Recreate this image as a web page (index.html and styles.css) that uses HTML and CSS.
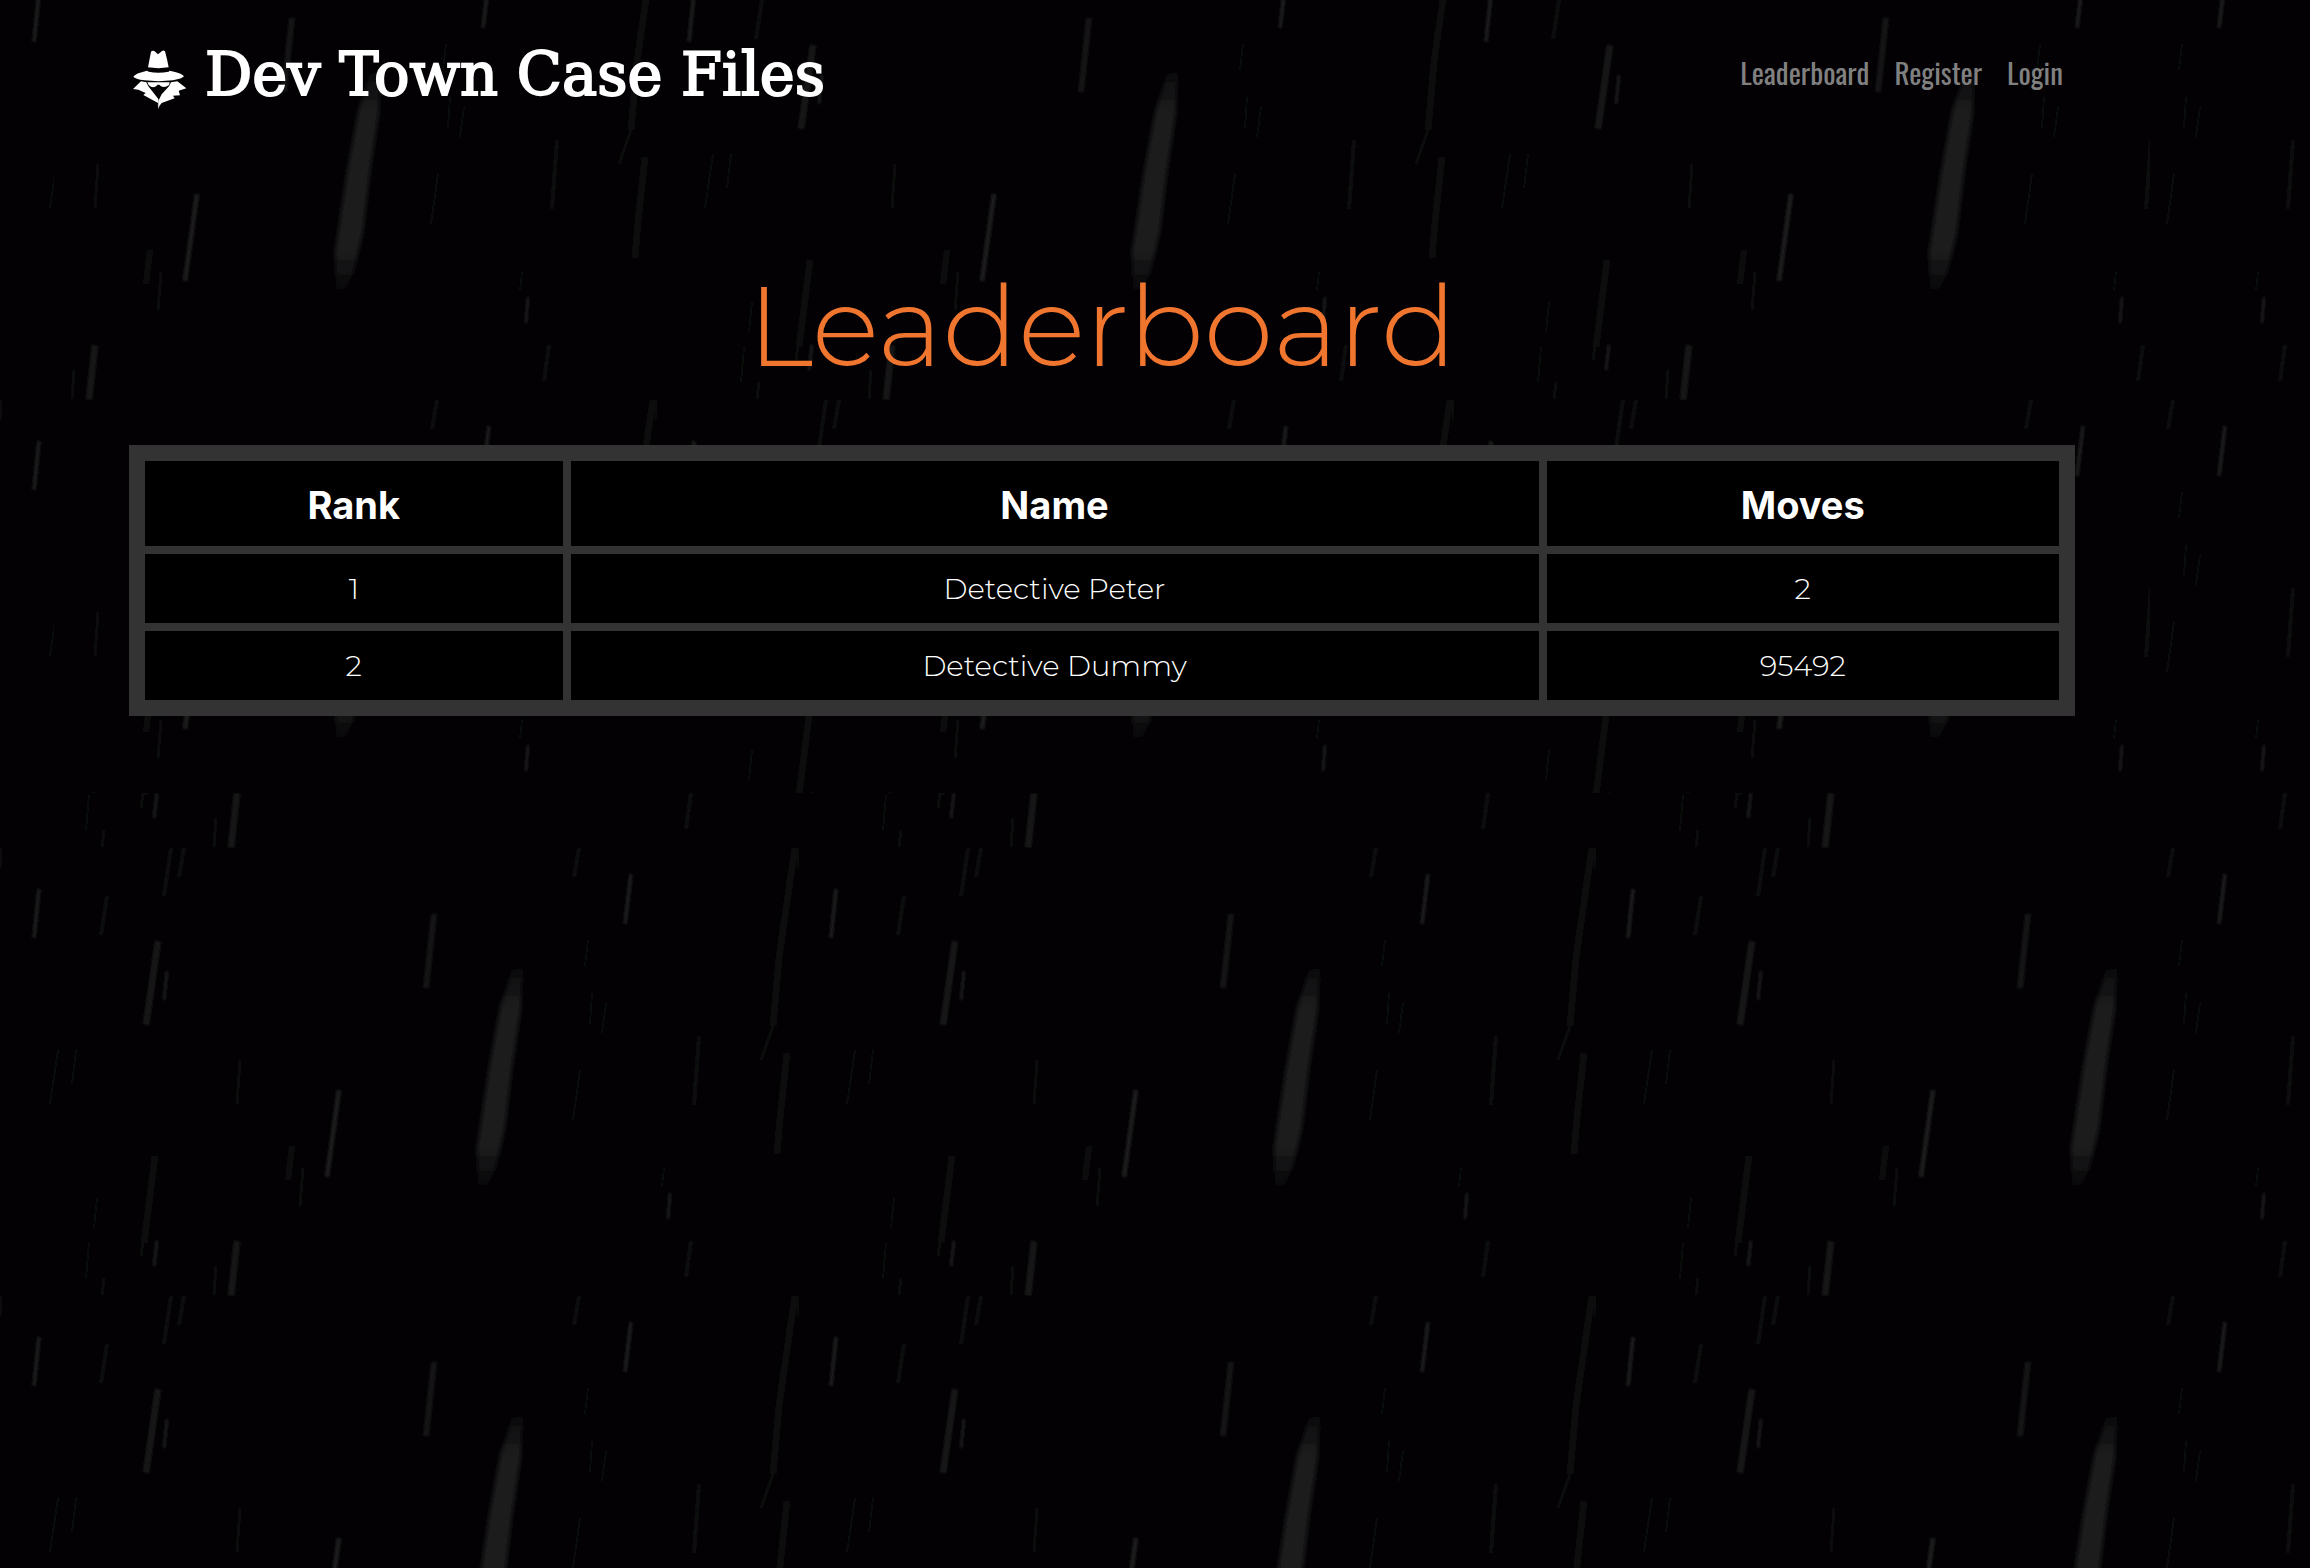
FILE: index.html
```html
<!DOCTYPE html>
<html lang="en">
<head>
<meta charset="utf-8">
<meta name="viewport" content="width=device-width, initial-scale=1">
<title>Dev Town Case Files - Leaderboard</title>
<link rel="stylesheet" href="styles.css">
</head>
<body>
<div class="page">
  <header class="topbar">
    <a class="brand" href="#">
      <svg class="brand-icon" viewBox="0 0 192 198" aria-hidden="true">
        <path d="M66 20 Q70 15 76 18 L87 28 L99 18 Q104 15 108 19 L114 43 L119 67 Q88 72 57 67 Z"/>
        <path d="M13 95 Q18 85 54 77 L59 80 Q88 86 119 80 L122 77 Q158 84 165 94 Q160 101 132 106 Q88 111 46 106 Q18 102 13 95 Z"/>
        <path d="M36 109 L52 112 L58 124 L88 162 L89 192 Q85 183 87 174 L50 154 L43 150 L50 144 L28 134 L12 132 Z"/>
        <path d="M145 109 L126 112 L120 124 L98 148 L88 168 L89 192 Q91 180 98 174 L137 160 L132 152 L153 151 L149 137 L172 130 Z"/>
        <path d="M55 112 L122 112 L120 120 Q106 131 95 123 L91 119 L86 119 L81 124 Q70 131 59 120 Z"/>
      </svg>
      <span>Dev Town Case Files</span>
    </a>
    <nav class="nav">
      <a href="#">Leaderboard</a>
      <a href="#">Register</a>
      <a href="#">Login</a>
    </nav>
  </header>
  <main>
    <h1 class="title">Leaderboard</h1>
    <table class="scores">
      <thead>
        <tr><th class="col-rank" scope="col">Rank</th><th class="col-name" scope="col">Name</th><th class="col-moves" scope="col">Moves</th></tr>
      </thead>
      <tbody>
        <tr><td>1</td><td>Detective Peter</td><td>2</td></tr>
        <tr><td>2</td><td>Detective Dummy</td><td>95492</td></tr>
      </tbody>
    </table>
  </main>
</div>
</body>
</html>
```
FILE: styles.css
```css
:root {
  --rain: url("data:image/svg+xml,%3Csvg xmlns='http://www.w3.org/2000/svg' width='797' height='448'%3E%3Cdefs%3E%3ClinearGradient id='g' x1='0' y1='0' x2='0' y2='1'%3E%3Cstop offset='0' stop-color='%231e1e1e' stop-opacity='.3'/%3E%3Cstop offset='.2' stop-color='%231e1e1e'/%3E%3Cstop offset='.8' stop-color='%231e1e1e'/%3E%3Cstop offset='1' stop-color='%231e1e1e' stop-opacity='.1'/%3E%3C/linearGradient%3E%3Cfilter id='s' x='-50%25' y='-10%25' width='200%25' height='120%25'%3E%3CfeGaussianBlur stdDeviation='1'/%3E%3C/filter%3E%3Cfilter id='b' x='-50%25' y='-10%25' width='200%25' height='120%25'%3E%3CfeGaussianBlur stdDeviation='2'/%3E%3C/filter%3E%3C/defs%3E%3Cpath d='M512 122 L523 120 L521 160 L512 220 L505 280 L495 322 L487 338 L478 340 L477 300 L489 220 L500 160 Z' fill='url(%23g)' filter='url(%23b)'/%3E%3Cg fill='none' filter='url(%23s)'%3E%3Cg stroke='%231a1a1a'%3E%3Cpath stroke-width='6' d='M434 66L426 140' opacity='.8'/%3E%3Cpath stroke-width='4' d='M39 41L34 90M631 26L625 76'/%3E%3Cpath stroke-width='5' d='M339 242L327 329'/%3E%3Cpath stroke-width='3' d='M670 345L668 371M157 393L154 418M167 123L164 152'/%3E%3C/g%3E%3Cg stroke='%23131413'%3E%3Cpath stroke-width='7' d='M158 93L146 177M237 393L231 448'/%3E%3Cpath stroke-width='6' d='M292 298L288 332' opacity='.8'/%3E%3Cpath stroke-width='3' d='M171 0L164 48M184 0L179 29M579 0L574 29M691 393L686 429M107 48L101 87M699 188L694 257'/%3E%3C/g%3E%3Cg stroke='%230b0e0b'%3E%3Cpath stroke-width='7' d='M795 0Q786 60 779 110L773 178M787 205L780 270L777 306M155 308L144 395'/%3E%3Cpath stroke-width='3' d='M773 178L761 212M240 212L237 256M104 430L102 447M216 418L214 447M143 393L141 408M303 320L300 358M1 0L0 20'/%3E%3Cpath stroke-width='2' d='M580 222L573 272M592 145L590 176M606 155L602 185M58 202L50 256M76 202L72 236M97 350L94 380M89 395L86 430M588 92L585 118M664 320L662 338'/%3E%3C/g%3E%3C/g%3E%3C/svg%3E");
  --night: #030104;
}

* {
  box-sizing: border-box;
}

body {
  margin: 0;
  min-height: 100vh;
  background: var(--night) var(--rain) 0 -48px;
  color: #fff;
  font-family: Inter, "Liberation Sans", sans-serif;
}

.page {
  margin: 0 160px 0 54px;
  padding: 42px 75px 77px;
  background: var(--night) var(--rain) -196px -48px;
}

.topbar {
  display: flex;
  align-items: flex-start;
  justify-content: space-between;
  height: 70px;
  padding-right: 12px;
}

.brand {
  display: flex;
  align-items: flex-start;
  gap: 12px;
  color: #fff;
  font-family: "Roboto Slab", "DejaVu Serif", serif;
  font-size: 59px;
  font-weight: 500;
  line-height: 66px;
  text-decoration: none;
  white-space: nowrap;
  -webkit-text-stroke: 2px #fff;
}

.brand-icon {
  width: 64px;
  height: 66px;
  margin-top: 3px;
  fill: #fff;
}

.nav {
  display: flex;
  gap: 25px;
  font-family: Oswald, "Liberation Sans Narrow", "Roboto Condensed", sans-serif;
  font-size: 29px;
  font-weight: 400;
  line-height: 60px;
}

.nav a {
  color: #808080;
  text-decoration: none;
}

.title {
  margin: 144px 0 49px;
  color: #f0752e;
  font-family: Montserrat, Inter, sans-serif;
  font-size: 112px;
  font-weight: 300;
  line-height: 140px;
  text-align: center;
}

.scores {
  width: 100%;
  table-layout: fixed;
  border: 8px solid #333;
  border-spacing: 8px;
  background: #333;
  text-align: center;
}

.scores th,
.scores td {
  padding: 0;
  background: #000;
}

.scores th {
  height: 85px;
  padding-top: 2px;
  font-size: 38px;
  font-weight: 700;
}

.scores td {
  height: 69px;
  font-family: Montserrat, Inter, sans-serif;
  font-size: 29px;
  font-weight: 300;
}

.col-rank {
  width: 22%;
}

.col-name {
  width: 51%;
}

.col-moves {
  width: 27%;
}
```
